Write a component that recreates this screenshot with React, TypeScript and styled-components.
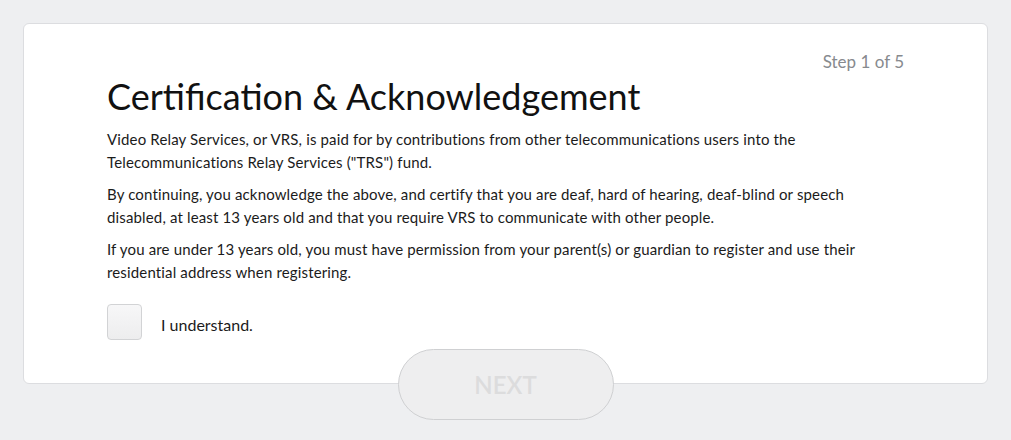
import styled, { createGlobalStyle } from 'styled-components';

const GlobalStyle = createGlobalStyle`
  html, body {
    margin: 0;
    padding: 0;
    background: #eeeff1;
  }

  body {
    font-family: Lato, 'Liberation Sans', sans-serif;
    color: #1b1b1b;
  }
`;

const StyledPage = styled.main`
  padding: 23px 23px 20px;
  min-height: 100vh;
  box-sizing: border-box;
  display: flex;
  flex-direction: column;
  align-items: stretch;
`;

const StyledCard = styled.section`
  background: #ffffff;
  border: 1px solid #dcdde0;
  border-radius: 6px;
  padding: 28px 83px 42px 83px;
  box-sizing: border-box;
  height: 361px;
`;

const StyledStep = styled.div`
  color: #878a8e;
  font-size: 17px;
  line-height: 20px;
  text-align: right;
`;

const StyledTitle = styled.h1`
  font-size: 36px;
  font-weight: 400;
  line-height: 44px;
  margin: 2px 0 10px;
  color: #111;
`;

const StyledText = styled.p`
  max-width: 770px;
  font-size: 15px;
  letter-spacing: 0.15px;
  line-height: 23px;
  margin: 0 0 9px;
`;

const StyledCheckRow = styled.label`
  display: flex;
  align-items: center;
  gap: 19px;
  margin-top: 20px;
  font-size: 16px;
`;

const StyledBox = styled.span`
  width: 35px;
  height: 36px;
  box-sizing: border-box;
  border: 1px solid #d2d3d5;
  border-radius: 4px;
  background: linear-gradient(#f7f7f8, #ededee);
`;

const StyledLabel = styled.span`
  padding-top: 4px;
`;

const StyledNext = styled.button`
  align-self: center;
  margin-top: -35px;
  width: 216px;
  height: 71px;
  border-radius: 36px;
  border: 1px solid #cfd0d2;
  background: #eeeeef;
  color: #dcdcdd;
  font-family: Lato, 'Liberation Sans', sans-serif;
  font-size: 24px;
  font-weight: 600;
`;

const App: React.FC = () => {
  return (
    <>
      <GlobalStyle />
      <StyledPage>
        <StyledCard>
          <StyledStep>Step 1 of 5</StyledStep>
          <StyledTitle>Certification &amp; Acknowledgement</StyledTitle>

          <StyledText>
            Video Relay Services, or VRS, is paid for by contributions from
            other telecommunications users into the Telecommunications Relay
            Services ("TRS") fund.
          </StyledText>
          <StyledText>
            By continuing, you acknowledge the above, and certify that you are
            deaf, hard of hearing, deaf-blind or speech disabled, at least 13
            years old and that you require VRS to communicate with other people.
          </StyledText>
          <StyledText>
            If you are under 13 years old, you must have permission from your
            parent(s) or guardian to register and use their residential address
            when registering.
          </StyledText>

          <StyledCheckRow>
            <StyledBox />
            <StyledLabel>I understand.</StyledLabel>
          </StyledCheckRow>
        </StyledCard>

        <StyledNext disabled>NEXT</StyledNext>
      </StyledPage>
    </>
  );
};

export default App;
